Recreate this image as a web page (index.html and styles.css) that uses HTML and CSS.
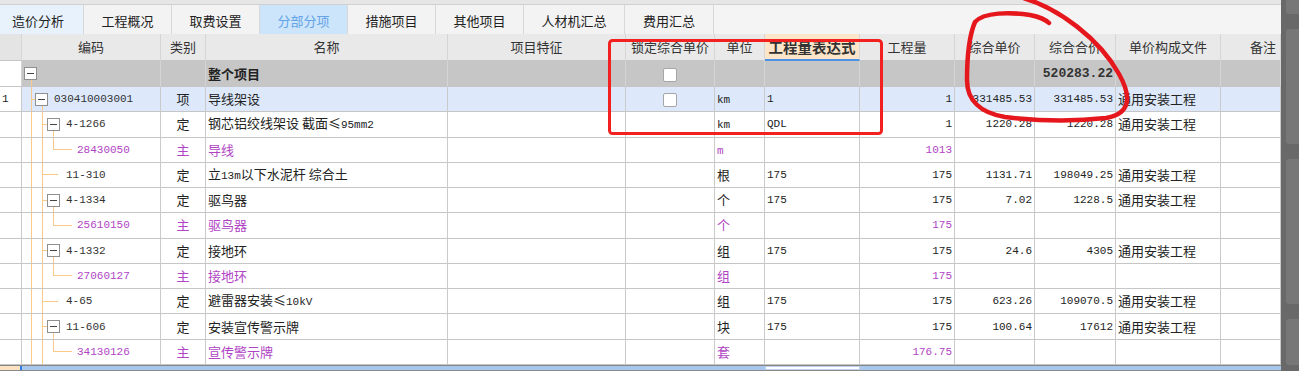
FILE: index.html
```html
<!DOCTYPE html>
<html lang="zh-CN">
<head>
  <meta charset="UTF-8">
  <title>分部分项</title>
  <link rel="stylesheet" href="styles.css">
</head>
<body>
  <div class="app">
    <div class="main">
      <div class="topstrip"></div>
      <div class="tabs">
        <div class="tab first">造价分析</div>
        <div class="tab">工程概况</div>
        <div class="tab">取费设置</div>
        <div class="tab active">分部分项</div>
        <div class="tab">措施项目</div>
        <div class="tab">其他项目</div>
        <div class="tab wide">人材机汇总</div>
        <div class="tab last">费用汇总</div>
      </div>
      <table class="grid">
        <colgroup>
          <col style="width:22px"><col style="width:139px"><col style="width:45px"><col style="width:242px">
          <col style="width:178px"><col style="width:89px"><col style="width:50px"><col style="width:95px">
          <col style="width:95px"><col style="width:80px"><col style="width:81px"><col style="width:105px">
          <col style="width:60px">
        </colgroup>
        <thead>
          <tr>
            <th class="rn"></th><th>编码</th><th>类别</th><th>名称</th><th>项目特征</th><th>锁定综合单价</th>
            <th>单位</th><th class="sel">工程量表达式</th><th>工程量</th><th>综合单价</th><th>综合合价</th>
            <th>单价构成文件</th><th class="note">备注</th>
          </tr>
        </thead>
        <tbody>
          <tr class="root">
            <td class="rn"></td><td class="code t0"><span class="box"></span></td><td></td>
            <td class="name bold">整个项目</td><td></td><td class="lock"><span class="chk"></span></td>
            <td></td><td></td><td></td><td></td><td class="num big">520283.22</td><td></td><td></td>
          </tr>
          <tr class="cur">
            <td class="rn">1</td><td class="code t1"><span class="box"></span><span class="txt">030410003001</span></td>
            <td class="kind">项</td><td class="name">导线架设</td><td></td><td class="lock"><span class="chk"></span></td>
            <td class="unit"><span class="n">km</span></td><td class="expr">1</td><td class="num">1</td>
            <td class="num">331485.53</td><td class="num">331485.53</td><td class="file">通用安装工程</td><td></td>
          </tr>
          <tr>
            <td class="rn"></td><td class="code t2"><span class="box"></span><span class="txt">4-1266</span></td>
            <td class="kind">定</td><td class="name">钢芯铝绞线架设 截面≤<span class="n">95mm2</span></td><td></td><td></td>
            <td class="unit"><span class="n">km</span></td><td class="expr">QDL</td><td class="num">1</td>
            <td class="num">1220.28</td><td class="num">1220.28</td><td class="file">通用安装工程</td><td></td>
          </tr>
          <tr class="main-mat">
            <td class="rn"></td><td class="code t3">28430050</td>
            <td class="kind">主</td><td class="name">导线</td><td></td><td></td>
            <td class="unit"><span class="n">m</span></td><td class="expr"></td><td class="num">1013</td>
            <td></td><td></td><td></td><td></td>
          </tr>
          <tr>
            <td class="rn"></td><td class="code tl">11-310</td>
            <td class="kind">定</td><td class="name">立<span class="n">13m</span>以下水泥杆 综合土</td><td></td><td></td>
            <td class="unit">根</td><td class="expr">175</td><td class="num">175</td>
            <td class="num">1131.71</td><td class="num">198049.25</td><td class="file">通用安装工程</td><td></td>
          </tr>
          <tr>
            <td class="rn"></td><td class="code t2"><span class="box"></span><span class="txt">4-1334</span></td>
            <td class="kind">定</td><td class="name">驱鸟器</td><td></td><td></td>
            <td class="unit">个</td><td class="expr">175</td><td class="num">175</td>
            <td class="num">7.02</td><td class="num">1228.5</td><td class="file">通用安装工程</td><td></td>
          </tr>
          <tr class="main-mat">
            <td class="rn"></td><td class="code t3">25610150</td>
            <td class="kind">主</td><td class="name">驱鸟器</td><td></td><td></td>
            <td class="unit">个</td><td class="expr"></td><td class="num">175</td>
            <td></td><td></td><td></td><td></td>
          </tr>
          <tr>
            <td class="rn"></td><td class="code t2"><span class="box"></span><span class="txt">4-1332</span></td>
            <td class="kind">定</td><td class="name">接地环</td><td></td><td></td>
            <td class="unit">组</td><td class="expr">175</td><td class="num">175</td>
            <td class="num">24.6</td><td class="num">4305</td><td class="file">通用安装工程</td><td></td>
          </tr>
          <tr class="main-mat">
            <td class="rn"></td><td class="code t3">27060127</td>
            <td class="kind">主</td><td class="name">接地环</td><td></td><td></td>
            <td class="unit">组</td><td class="expr"></td><td class="num">175</td>
            <td></td><td></td><td></td><td></td>
          </tr>
          <tr>
            <td class="rn"></td><td class="code tl">4-65</td>
            <td class="kind">定</td><td class="name">避雷器安装≤<span class="n">10kV</span></td><td></td><td></td>
            <td class="unit">组</td><td class="expr">175</td><td class="num">175</td>
            <td class="num">623.26</td><td class="num">109070.5</td><td class="file">通用安装工程</td><td></td>
          </tr>
          <tr>
            <td class="rn"></td><td class="code t2"><span class="box"></span><span class="txt">11-606</span></td>
            <td class="kind">定</td><td class="name">安装宣传警示牌</td><td></td><td></td>
            <td class="unit">块</td><td class="expr">175</td><td class="num">175</td>
            <td class="num">100.64</td><td class="num">17612</td><td class="file">通用安装工程</td><td></td>
          </tr>
          <tr class="main-mat">
            <td class="rn"></td><td class="code t3">34130126</td>
            <td class="kind">主</td><td class="name">宣传警示牌</td><td></td><td></td>
            <td class="unit">套</td><td class="expr"></td><td class="num">176.75</td>
            <td></td><td></td><td></td><td></td>
          </tr>
        </tbody>
      </table>
      <div class="foot">
        <span class="f-peach"></span><span class="f-mark"></span><span class="f-blue"></span><span class="f-white"></span><span class="f-rest"></span>
      </div>
    </div>
    <div class="side">
      <span></span><span></span><span></span><span></span>
    </div>
  </div>

  <!-- hand drawn marks on top of the screenshot -->
  <svg class="marks" width="1299" height="371" viewBox="0 0 1299 371">
    <rect x="609.5" y="40.5" width="272" height="93" rx="3" fill="none" stroke="#f2211f" stroke-width="3"/>
    <path d="M1020,-3 C1060,8 1100,40 1119,74 C1133,99 1129,114 1106,118 C1070,122 1030,120 1005,117 C980,113 967,100 967,80 C967,60 969,36 975,22 C984,12 1010,12 1030,15 C1040,17 1046,20 1049,23"
          fill="none" stroke="#e5161c" stroke-width="4.5" stroke-linecap="round" stroke-linejoin="round"/>
  </svg>
</body>
</html>
```

FILE: styles.css
```css
* {
  box-sizing: border-box;
}

body {
  margin: 0;
  font-family: "Noto Sans CJK SC", "Noto Sans", sans-serif;
  font-size: 13px;
  color: #222;
  background: #6b6b6b;
  overflow: hidden;
}

.app {
  display: flex;
  width: 1299px;
  height: 371px;
}

.main {
  width: 1281px;
  display: flex;
  flex-direction: column;
  background: #fff;
}

/* right hand dark area */
.side {
  flex: 1;
  display: flex;
  flex-direction: column;
  gap: 15px;
  padding: 0 0 6px 5px;
  background: #696969;
}
.side span {
  background: #777;
  border-radius: 3px 0 0 3px;
}
.side span:nth-child(1) { height: 14px; border-radius: 0 0 0 3px; }
.side span:nth-child(2) { height: 115px; }
.side span:nth-child(3) { height: 145px; }
.side span:nth-child(4) { flex: 1; }

.topstrip {
  height: 5px;
  background: #e6e6e6;
  border-bottom: 1px solid #d0d0d0;
}

/* tabs */
.tabs {
  height: 29px;
  display: flex;
  background: #f4f4f4;
}
.tab {
  width: 88px;
  display: flex;
  align-items: center;
  justify-content: center;
  padding-top: 2px;
  border-right: 1px solid #d8d8d8;
  background: #f3f3f3;
  color: #222;
}
.tab.first {
  width: 84px;
  padding-right: 7px;
  background: #e8f2fc;
}
.tab.active {
  background: #cce5fa;
  color: #63a3e6;
}
.tab.wide { width: 101px; }
.tab.last { width: 89px; }

/* grid */
.grid {
  width: 1281px;
  table-layout: fixed;
  border-collapse: separate;
  border-spacing: 0;
}
.grid th,
.grid td {
  padding: 0 2px;
  border-right: 1px solid #cacaca;
  border-bottom: 1px solid #c6c6c6;
  white-space: nowrap;
  overflow: hidden;
  line-height: 16px;
}
.grid thead tr { height: 27px; }
.grid th {
  background: #e9e9e9;
  font-weight: normal;
  color: #333;
  text-align: center;
  border-right-color: #d6d6d6;
}
.grid th.rn { background: #e4e4e4; }
.grid th.sel {
  background: #fde5c9;
  border-bottom: 2px solid #4c93e6;
  font-weight: bold;
  font-size: 14.5px;
}
.grid th.note {
  text-align: right;
  padding-right: 4px;
}

.grid tbody tr { height: 25.27px; }
.grid tr.root { height: 26px; }
.grid tr.root td { background-color: #c6c6c6; border-right-color: #d4d4d4; }
.grid tr.cur td { background-color: #dde9fb; }
.grid tr td.rn { background-color: #fff; }

.rn {
  padding-left: 6px;
  font-family: "Liberation Mono", monospace;
  font-size: 11px;
}

.n,
.code,
.expr,
.num {
  font-family: "Liberation Mono", monospace;
  font-size: 11px;
}

.kind { text-align: center; }
.name { padding-left: 2px; }
.bold { font-weight: bold; }
.lock { text-align: center; }
.unit { padding-left: 2px; }
.expr { padding-left: 3px; }
.num {
  text-align: right;
  padding-right: 4px;
}
.num.big {
  font-size: 13px;
  font-weight: bold;
  color: #333;
}
.file { padding-left: 2px; }

.main-mat td { color: #b044c4; }

/* tree column, connector lines drawn as background layers */
.code {
  --g: linear-gradient(#f9c98c, #f9c98c);
  color: #333;
  background-repeat: no-repeat;
}
.code.t0 {
  padding-left: 2px;
  background-image: var(--g);
  background-position: 9px 100%;
  background-size: 1px 50%;
}
.code.t1 {
  padding-left: 13px;
  background-image: var(--g), var(--g), var(--g);
  background-position: 9px 0, 9px 50%, 20px 100%;
  background-size: 1px 100%, 4px 1px, 1px 50%;
}
.code.t2 {
  padding-left: 25px;
  background-image: var(--g), var(--g), var(--g), var(--g);
  background-position: 9px 0, 20px 0, 20px 50%, 31px 100%;
  background-size: 1px 100%, 1px 100%, 5px 1px, 1px 50%;
}
.code.tl {
  padding-left: 44px;
  background-image: var(--g), var(--g), var(--g);
  background-position: 9px 0, 20px 0, 20px 50%;
  background-size: 1px 100%, 1px 100%, 16px 1px;
}
.code.t3 {
  padding-left: 55px;
  background-image: var(--g), var(--g), var(--g), var(--g);
  background-position: 9px 0, 20px 0, 31px 0, 31px 50%;
  background-size: 1px 100%, 1px 100%, 1px 50%, 19px 1px;
}
.main-mat .code { color: #b044c4; }

.box {
  display: inline-block;
  width: 13px;
  height: 13px;
  vertical-align: middle;
  border: 1px solid #8f8f8f;
  background: #fff linear-gradient(#444, #444) no-repeat center / 7px 1px;
}
.box + .txt { margin-left: 6px; vertical-align: middle; }

.chk {
  display: inline-block;
  width: 14px;
  height: 14px;
  vertical-align: middle;
  border: 1px solid #a6a6a6;
  border-radius: 2px;
  background: #fff;
}

/* bottom bar */
.foot {
  height: 6px;
  display: flex;
  border-top: 1px solid #858585;
  border-bottom: 1px solid #8a8a8a;
}
.f-peach { width: 20px; background: #fde2c2; }
.f-mark { width: 2px; background: #2f7de1; }
.f-blue { width: 743px; background: #a9c7ec; }
.f-white { width: 95px; background: #fff; border: 1px solid #bcd2ee; }
.f-rest { flex: 1; background: #a9c7ec; }

.marks {
  position: absolute;
  top: 0;
  left: 0;
  pointer-events: none;
}
```
